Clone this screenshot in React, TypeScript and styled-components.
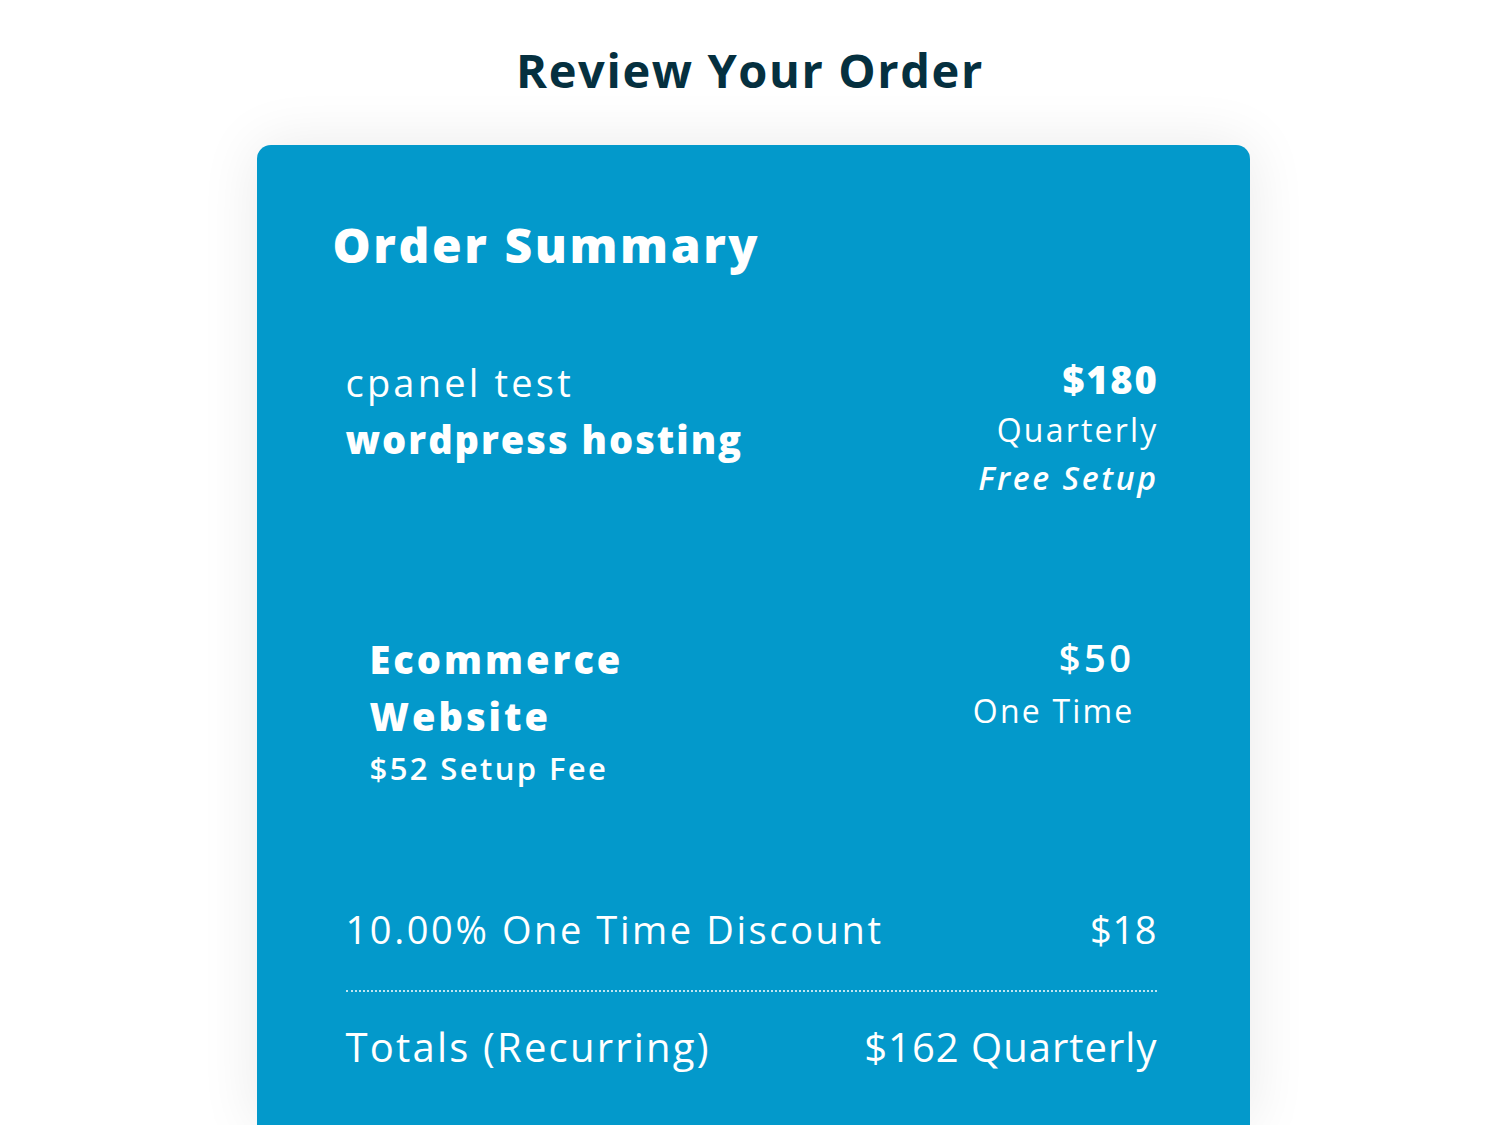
import styled, { createGlobalStyle } from 'styled-components';

const GlobalStyle = createGlobalStyle`
  html, body {
    margin: 0;
    padding: 0;
    background: #ffffff;
  }
  body {
    font-family: "Open Sans", "Liberation Sans", sans-serif;
    overflow: hidden;
  }
`;

const items = [
  {
    id: 1,
    group: 'cpanel test',
    name: 'wordpress hosting',
    price: '$180',
    cycle: 'Quarterly',
    setup: 'Free Setup',
    addon: false,
  },
  {
    id: 2,
    group: '',
    name: 'Ecommerce Website',
    price: '$50',
    cycle: 'One Time',
    setup: '$52 Setup Fee',
    addon: true,
  },
];

export default function App() {
  return (
    <Page>
      <GlobalStyle />
      <Title>Review Your Order</Title>
      <Card>
        <CardTitle>Order Summary</CardTitle>
        <div className="items">
          {items.map((item) => (
            <Item key={item.id} $addon={item.addon}>
              <div className="item__info">
                {item.group && <p className="item__group">{item.group}</p>}
                <p className="item__name">{item.name}</p>
                {item.addon && <p className="item__fee">{item.setup}</p>}
              </div>
              <div className="item__price">
                <p className="item__amount">{item.price}</p>
                <p className="item__cycle">{item.cycle}</p>
                {!item.addon && <p className="item__setup">{item.setup}</p>}
              </div>
            </Item>
          ))}
        </div>
        <Discount>
          <span>10.00% One Time Discount</span>
          <Value $spacing={0.6}>$18</Value>
        </Discount>
        <Totals>
          <span>Totals (Recurring)</span>
          <Value $spacing={1}>$162 Quarterly</Value>
        </Totals>
      </Card>
    </Page>
  );
}

const Page = styled.div`
  display: flex;
  flex-direction: column;
  align-items: center;
  height: 1125px;
  padding-top: 40px;
  box-sizing: border-box;
`;

const Title = styled.h1`
  margin: 0;
  font-size: 47px;
  line-height: 60px;
  font-weight: 700;
  color: #05303f;
  letter-spacing: 1.6px;
`;

const Card = styled.div`
  width: 993px;
  box-sizing: border-box;
  margin: 45px 0 0 6px;
  flex: 1;
  background: #0399cb;
  border-radius: 14px 14px 0 0;
  box-shadow: 0 0 60px rgba(0, 0, 0, 0.09);
  padding: 72px 93px 0 89px;
  color: #ffffff;

  .items {
    display: flex;
    flex-direction: column;
    gap: 130px;
    margin-top: 80px;
  }
`;

const CardTitle = styled.h2`
  margin: 0 0 0 -13px;
  font-size: 48px;
  line-height: 56px;
  font-weight: 800;
  letter-spacing: 2.6px;
`;

const Item = styled.div<{ $addon: boolean }>`
  display: flex;
  justify-content: space-between;
  align-items: flex-start;
  padding: 0 ${(p) => (p.$addon ? '24px' : '0')};

  p {
    margin: 0;
  }

  .item__info {
    width: ${(p) => (p.$addon ? '320px' : 'auto')};
  }

  .item__group {
    font-size: 38px;
    line-height: 58px;
    font-weight: 400;
    letter-spacing: 3.2px;
  }

  .item__name {
    font-size: 38px;
    line-height: 57px;
    font-weight: 800;
    letter-spacing: ${(p) => (p.$addon ? '3px' : '2px')};
  }

  .item__fee {
    font-size: 31px;
    line-height: 46px;
    font-weight: 600;
    letter-spacing: 2.4px;
  }

  .item__price {
    display: flex;
    flex-direction: column;
    align-items: flex-end;
    text-align: right;
    margin-right: -2px;
  }

  .item__amount {
    font-size: 38px;
    line-height: 52px;
    font-weight: ${(p) => (p.$addon ? 600 : 800)};
    letter-spacing: ${(p) => (p.$addon ? '3.5px' : '1.8px')};
  }

  .item__cycle {
    font-size: 32px;
    line-height: ${(p) => (p.$addon ? '56px' : '50px')};
    font-weight: 500;
    letter-spacing: 2.2px;
  }

  .item__setup {
    font-size: 32px;
    line-height: 46px;
    font-weight: 600;
    font-style: italic;
    letter-spacing: 2.6px;
  }
`;

const Value = styled.span<{ $spacing: number }>`
  letter-spacing: ${(p) => p.$spacing}px;
  margin-right: -${(p) => p.$spacing}px;
`;

const Discount = styled.div`
  display: flex;
  justify-content: space-between;
  margin-top: 110px;
  padding-bottom: 33px;
  border-bottom: 2px dotted rgba(255, 255, 255, 0.75);
  font-size: 38px;
  line-height: 56px;
  font-weight: 500;
  letter-spacing: 2.6px;
`;

const Totals = styled.div`
  display: flex;
  justify-content: space-between;
  margin-top: 24px;
  font-size: 40px;
  line-height: 62px;
  font-weight: 500;
  letter-spacing: 2.2px;
`;
